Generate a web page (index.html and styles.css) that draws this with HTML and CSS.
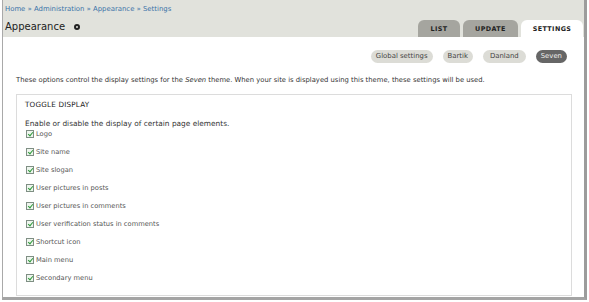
FILE: index.html
```html
<!DOCTYPE html>
<html lang="en">
<head>
  <meta charset="UTF-8">
  <title>Appearance - Settings</title>
  <link rel="stylesheet" href="styles.css">
</head>
<body>
  <div class="window">
    <div class="header">
      <div class="title-block">
        <div class="breadcrumb">
          <a href="#">Home</a> » <a href="#">Administration</a> » <a href="#">Appearance</a> » <a href="#">Settings</a>
        </div>
        <h1>Appearance <span class="shortcut"></span></h1>
      </div>
      <ul class="tabs">
        <li><a href="#">LIST</a></li>
        <li><a href="#">UPDATE</a></li>
        <li class="active"><a href="#">SETTINGS</a></li>
      </ul>
    </div>

    <div class="content">
      <ul class="pills">
        <li>Global settings</li>
        <li>Bartik</li>
        <li>Danland</li>
        <li class="active">Seven</li>
      </ul>

      <p class="intro">These options control the display settings for the <em>Seven</em> theme. When your site is displayed using this theme, these settings will be used.</p>

      <fieldset class="toggle">
        <legend>TOGGLE DISPLAY</legend>
        <p class="help">Enable or disable the display of certain page elements.</p>
        <div class="option"><span class="check"></span>Logo</div>
        <div class="option"><span class="check"></span>Site name</div>
        <div class="option"><span class="check"></span>Site slogan</div>
        <div class="option"><span class="check"></span>User pictures in posts</div>
        <div class="option"><span class="check"></span>User pictures in comments</div>
        <div class="option"><span class="check"></span>User verification status in comments</div>
        <div class="option"><span class="check"></span>Shortcut icon</div>
        <div class="option"><span class="check"></span>Main menu</div>
        <div class="option"><span class="check"></span>Secondary menu</div>
      </fieldset>
    </div>
  </div>
</body>
</html>
```

FILE: styles.css
```css
* {
  margin: 0;
  padding: 0;
  box-sizing: border-box;
}

body {
  background: #fff;
  font-family: "DejaVu Sans", Verdana, sans-serif;
  color: #444;
  padding-left: 2px;
}

.window {
  width: 585px;
  height: 300px;
  border-left: 1px solid #a9a9a9;
  border-right: 3px solid #9c9c9c;
  border-bottom: 3px solid #a4a4a4;
  background: #fff;
}

.header {
  background: #e1e2dc;
  height: 37px;
  display: flex;
  justify-content: space-between;
  align-items: flex-end;
}

.title-block {
  align-self: flex-start;
  padding-left: 2px;
}

.breadcrumb {
  font-size: 6.9px;
  margin-top: 5px;
  color: #3b73a8;
}

.breadcrumb a {
  color: #3b73a8;
  text-decoration: none;
}

h1 {
  font-family: "DejaVu Sans", sans-serif;
  font-weight: normal;
  font-size: 10px;
  color: #222;
  margin-top: 8px;
  display: flex;
  align-items: center;
}

.shortcut {
  display: inline-block;
  width: 6px;
  height: 6px;
  border: 2px solid #222;
  border-radius: 50%;
  margin-left: 9px;
}

.tabs {
  list-style: none;
  display: flex;
  gap: 3px;
  margin-right: 1px;
}

.tabs li a {
  display: block;
  height: 17px;
  line-height: 18px;
  background: #a5a59f;
  color: #222;
  font-size: 6.4px;
  font-weight: bold;
  letter-spacing: 0.4px;
  text-decoration: none;
  text-align: center;
  border-radius: 6px 6px 0 0;
}

.tabs li:nth-child(1) a {
  width: 42px;
}

.tabs li:nth-child(2) a {
  width: 55px;
}

.tabs li.active a {
  background: #fff;
  width: 62px;
}

.content {
  padding: 13px 12px 0 13px;
}

.pills {
  list-style: none;
  display: flex;
  justify-content: flex-end;
  gap: 10px;
  margin-right: 5px;
}

.pills li {
  font-size: 6.9px;
  line-height: 13px;
  height: 13px;
  padding: 0 5px;
  background: #dcdcd6;
  color: #444;
  border-radius: 7px;
}

.pills li:nth-child(3) {
  padding: 0 7px;
}

.pills li.active {
  background: #666;
  color: #eee;
}

.intro {
  font-size: 6.8px;
  margin-top: 13px;
  color: #333;
}

.toggle {
  margin-top: 10px;
  border: 1px solid #dcdcdc;
  height: 202px;
  padding: 0 8px;
}

.toggle legend {
  float: left;
  font-size: 7.2px;
  letter-spacing: 0.2px;
  color: #222;
  margin-top: 5px;
  width: 100%;
}

.help {
  clear: both;
  padding-top: 10px;
  font-size: 7.4px;
  line-height: 9px;
  color: #333;
}

.option {
  display: flex;
  align-items: center;
  font-size: 6.7px;
  color: #555;
  height: 18px;
}

.help + .option {
  height: 12px;
  margin-bottom: 3px;
}

.check {
  display: inline-block;
  width: 8px;
  height: 8px;
  border: 1px solid #7f8f84;
  background: #eef5ee;
  margin: 0 2px 0 1px;
  position: relative;
}

.check::after {
  content: "";
  position: absolute;
  left: 1.5px;
  top: 0;
  width: 2px;
  height: 4px;
  border-right: 1.4px solid #2f9a3a;
  border-bottom: 1.4px solid #2f9a3a;
  transform: rotate(40deg);
}
```
